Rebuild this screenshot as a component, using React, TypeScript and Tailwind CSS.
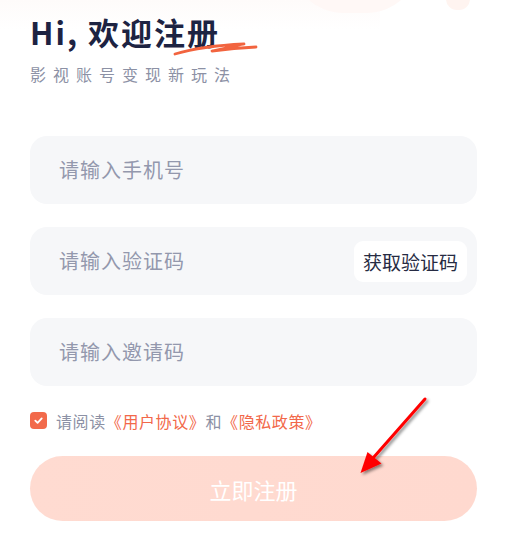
import React from 'react';

const font = { fontFamily: '"Noto Sans CJK SC", "Noto Sans", sans-serif' };

function Field({ placeholder, action }: { placeholder: string; action?: string }) {
  return (
    <div className="flex items-center h-[68px] rounded-[17px] bg-[#f6f7f9] pl-[29px] pr-[10px]">
      <span className="flex-1 text-[20px] leading-[20px] tracking-[1px] text-[#9398ad]">{placeholder}</span>
      {action && (
        <span className="flex items-center justify-center h-[41px] w-[113px] rounded-[9px] bg-white text-[19px] leading-[19px] text-[#262b43]">
          {action}
        </span>
      )}
    </div>
  );
}

export default function App() {
  return (
    <div className="relative w-[507px] h-[546px] overflow-hidden bg-white" style={font}>
      {/* faint background blobs */}
      <div className="absolute left-0 top-0 w-[380px] h-[30px] bg-gradient-to-b from-[#fefbfa] to-white" />
      <div className="absolute left-[290px] top-[-95px] w-[130px] h-[108px] rounded-full bg-[#fff8f6]" />
      <div className="absolute left-[446px] top-[-12px] w-[24px] h-[22px] rounded-full bg-[#fff4f0]" />

      <div className="relative flex flex-col px-[30px]">
        <div className="relative mt-[17px] w-fit">
          <h1 className="text-[31px] leading-[30px] font-bold tracking-[2px] text-[#1d2342]">Hi, 欢迎注册</h1>
          <svg className="absolute left-[142px] top-[23px]" width="90" height="16" viewBox="0 0 90 16" fill="none">
            <path
              d="M3 14 Q30 6 72 4 L40 11 Q62 8 84 7"
              stroke="#f2643f"
              strokeWidth="2.8"
              strokeLinecap="round"
              strokeLinejoin="round"
            />
          </svg>
        </div>
        <p className="mt-[19px] text-[16px] leading-[16px] tracking-[7px] text-[#8c91a5]">影视账号变现新玩法</p>

        <div className="mt-[54px] flex flex-col gap-[23px]">
          <Field placeholder="请输入手机号" />
          <Field placeholder="请输入验证码" action="获取验证码" />
          <Field placeholder="请输入邀请码" />
        </div>

        <div className="mt-[26px] flex items-center gap-[9px] text-[16px] leading-[16px] tracking-[0.6px]">
          <span className="flex items-center justify-center w-[17px] h-[17px] rounded-[4px] bg-[#f26a4b]">
            <svg width="11" height="11" viewBox="0 0 12 12" fill="none">
              <path d="M2.5 6.2 L5 8.5 L9.5 3.8" stroke="white" strokeWidth="2" strokeLinecap="round" strokeLinejoin="round" />
            </svg>
          </span>
          <span className="text-[#8c91a5]">
            请阅读<span className="text-[#f2684a]">《用户协议》</span>和<span className="text-[#f2684a]">《隐私政策》</span>
          </span>
        </div>

        <button className="mt-[27px] h-[65px] rounded-full bg-gradient-to-r from-[#ffdbd1] to-[#ffd9cf] text-white text-[22px] leading-[22px]">
          立即注册
        </button>
      </div>

      {/* annotation arrow */}
      <svg className="absolute left-0 top-0 pointer-events-none" width="507" height="546" viewBox="0 0 507 546" fill="none">
        <defs>
          <filter id="sh" x="-20%" y="-20%" width="140%" height="140%">
            <feDropShadow dx="2" dy="2" stdDeviation="1.5" floodColor="#000" floodOpacity="0.45" />
          </filter>
        </defs>
        <g filter="url(#sh)">
          <line x1="425" y1="399" x2="366" y2="466" stroke="#ff0000" strokeWidth="3" strokeLinecap="round" />
          <path d="M360.5 473 L367.5 452 L381.5 463.5 Z" fill="#ff0000" />
        </g>
      </svg>
    </div>
  );
}
